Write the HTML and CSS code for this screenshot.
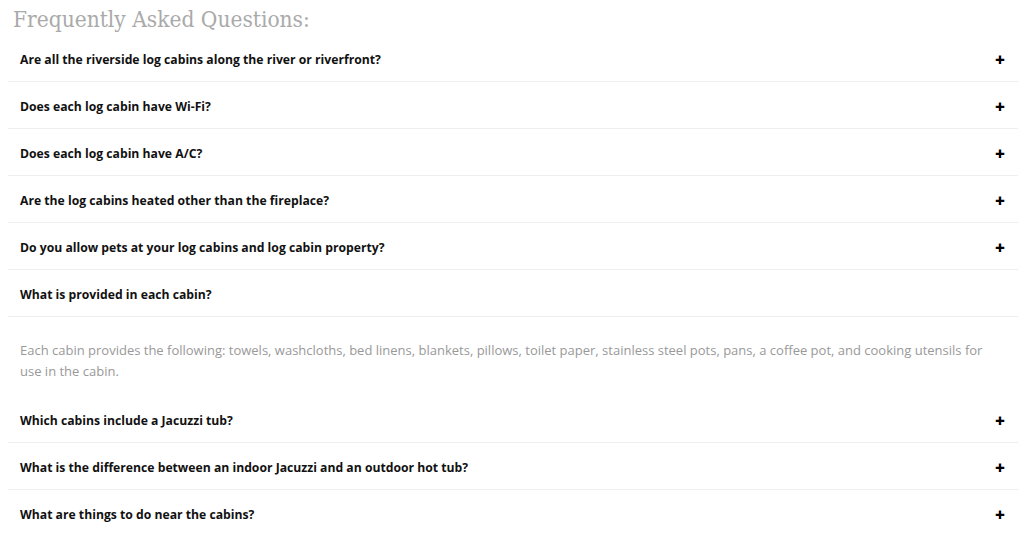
FILE: index.html
```html
<!DOCTYPE html>
<html lang="en">
<head>
    <meta charset="UTF-8">
    <meta name="viewport" content="width=device-width, initial-scale=1.0">
    <title>Frequently Asked Questions</title>
    <link rel="stylesheet" href="styles.css">
</head>
<body>
<div class="faq">
    <h2 class="faq-title">Frequently Asked Questions:</h2>
    <div class="faq-item">
        <div class="faq-question"><span>Are all the riverside log cabins along the river or riverfront?</span><span class="faq-toggle">+</span></div>
    </div>
    <div class="faq-item">
        <div class="faq-question"><span>Does each log cabin have Wi-Fi?</span><span class="faq-toggle">+</span></div>
    </div>
    <div class="faq-item">
        <div class="faq-question"><span>Does each log cabin have A/C?</span><span class="faq-toggle">+</span></div>
    </div>
    <div class="faq-item">
        <div class="faq-question"><span>Are the log cabins heated other than the fireplace?</span><span class="faq-toggle">+</span></div>
    </div>
    <div class="faq-item">
        <div class="faq-question"><span>Do you allow pets at your log cabins and log cabin property?</span><span class="faq-toggle">+</span></div>
    </div>
    <div class="faq-item open">
        <div class="faq-question"><span>What is provided in each cabin?</span></div>
        <div class="faq-answer">Each cabin provides the following: towels, washcloths, bed linens, blankets, pillows, toilet paper, stainless steel pots, pans, a coffee pot, and cooking utensils for use in the cabin.</div>
    </div>
    <div class="faq-item">
        <div class="faq-question"><span>Which cabins include a Jacuzzi tub?</span><span class="faq-toggle">+</span></div>
    </div>
    <div class="faq-item">
        <div class="faq-question"><span>What is the difference between an indoor Jacuzzi and an outdoor hot tub?</span><span class="faq-toggle">+</span></div>
    </div>
    <div class="faq-item">
        <div class="faq-question"><span>What are things to do near the cabins?</span><span class="faq-toggle">+</span></div>
    </div>
</div>
</body>
</html>
```
FILE: styles.css
```css
body {
    margin: 0;
    padding: 0 6px 0 8px;
    font-family: "Open Sans", Arial, sans-serif;
    background: #fff;
}
.faq-title {
    margin: 0;
    padding: 4px 0 0 5px;
    font-family: "DejaVu Serif", serif;
    font-stretch: condensed;
    font-weight: normal;
    font-size: 22.5px;
    line-height: 31px;
    color: #aaa;
}
.faq-item {
    border-bottom: 1px solid #eee;
}
.faq-item.open {
    border-bottom: none;
}
.faq-question {
    display: flex;
    justify-content: space-between;
    align-items: center;
    padding: 14px 13px 10px 12px;
    font-size: 12.2px;
    font-weight: bold;
    line-height: 22px;
    color: #111;
}
.faq-item.open .faq-question {
    border-bottom: 1px solid #eee;
}
.faq-toggle {
    font-size: 17px;
    font-weight: 800;
    color: #000;
}
.faq-answer {
    padding: 23px 12px 14px 12px;
    font-size: 13px;
    line-height: 21px;
    color: #999;
}
```
